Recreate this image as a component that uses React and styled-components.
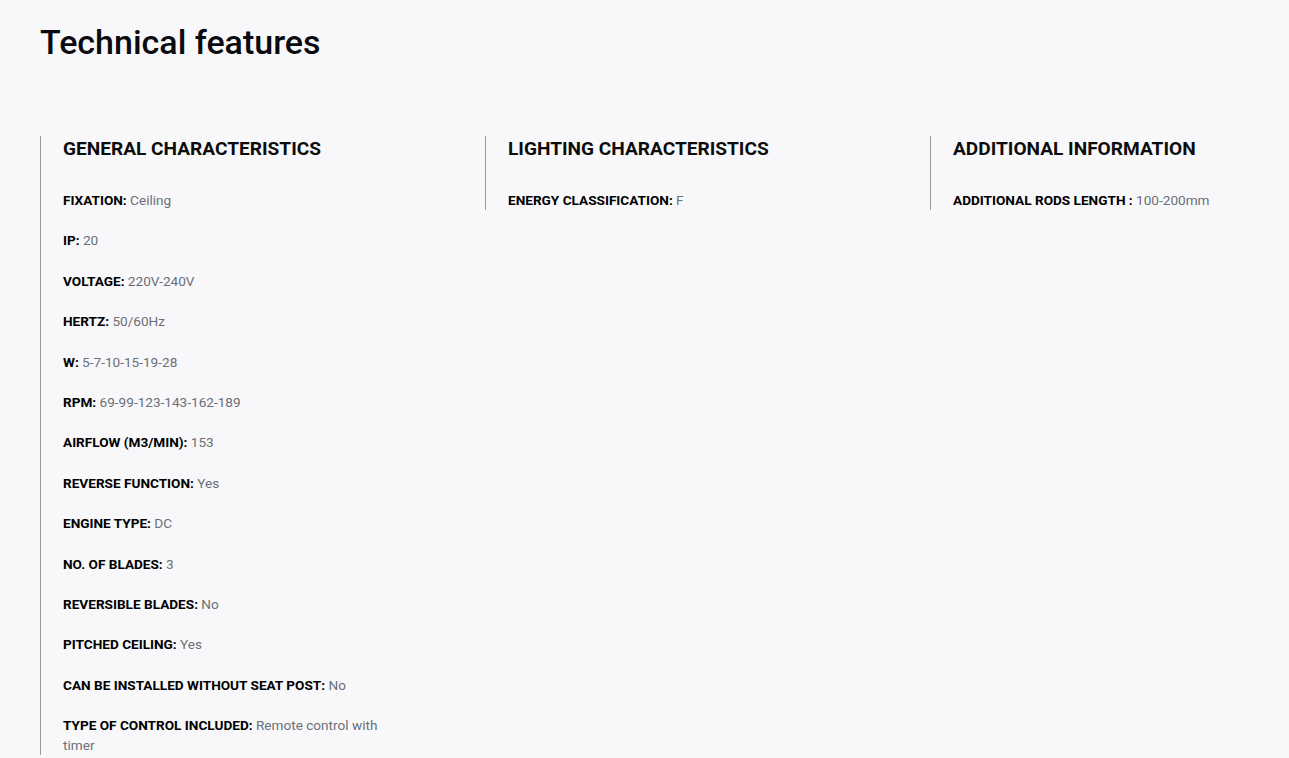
import React from 'react';
import styled, { createGlobalStyle } from 'styled-components';

const GlobalStyle = createGlobalStyle`
  html, body {
    margin: 0;
    padding: 0;
    background: #f8f8fa;
    font-family: Roboto, "Liberation Sans", sans-serif;
    color: #000;
  }
`;

const Page = styled.div`
  padding: 22px 40px 0;
`;

const Title = styled.h1`
  margin: 0 0 74px;
  font-size: 34px;
  font-weight: 500;
  line-height: 40px;
  color: #0a0a0f;
`;

const Columns = styled.div`
  display: grid;
  grid-template-columns: 445px 445px 1fr;
  align-items: start;
`;

const Column = styled.section`
  border-left: 1px solid #9c9c9c;
  padding: 0 0 0 22px;
`;

const Heading = styled.h2`
  margin: 0 0 28px;
  font-size: 19.1px;
  font-weight: 700;
  line-height: 26px;
  color: #0d0d0d;
`;

const Item = styled.p`
  margin: 0;
  max-width: 335px;
  font-size: 13.6px;
  line-height: 20px;
  color: #6b6f78;
  & + & {
    margin-top: 20.4px;
  }
`;

const Label = styled.strong`
  font-weight: 700;
  color: #000;
`;

const sections = [
  {
    title: 'GENERAL CHARACTERISTICS',
    items: [
      ['FIXATION:', 'Ceiling'],
      ['IP:', '20'],
      ['VOLTAGE:', '220V-240V'],
      ['HERTZ:', '50/60Hz'],
      ['W:', '5-7-10-15-19-28'],
      ['RPM:', '69-99-123-143-162-189'],
      ['AIRFLOW (M3/MIN):', '153'],
      ['REVERSE FUNCTION:', 'Yes'],
      ['ENGINE TYPE:', 'DC'],
      ['NO. OF BLADES:', '3'],
      ['REVERSIBLE BLADES:', 'No'],
      ['PITCHED CEILING:', 'Yes'],
      ['CAN BE INSTALLED WITHOUT SEAT POST:', 'No'],
      ['TYPE OF CONTROL INCLUDED:', 'Remote control with timer'],
    ],
  },
  {
    title: 'LIGHTING CHARACTERISTICS',
    items: [['ENERGY CLASSIFICATION:', 'F']],
  },
  {
    title: 'ADDITIONAL INFORMATION',
    items: [['ADDITIONAL RODS LENGTH :', '100-200mm']],
  },
];

const App = () => (
  <>
    <GlobalStyle />
    <Page>
      <Title>Technical features</Title>
      <Columns>
        {sections.map((section) => (
          <Column key={section.title}>
            <Heading>{section.title}</Heading>
            {section.items.map(([label, value]) => (
              <Item key={label}>
                <Label>{label}</Label> {value}
              </Item>
            ))}
          </Column>
        ))}
      </Columns>
    </Page>
  </>
);

export default App;
